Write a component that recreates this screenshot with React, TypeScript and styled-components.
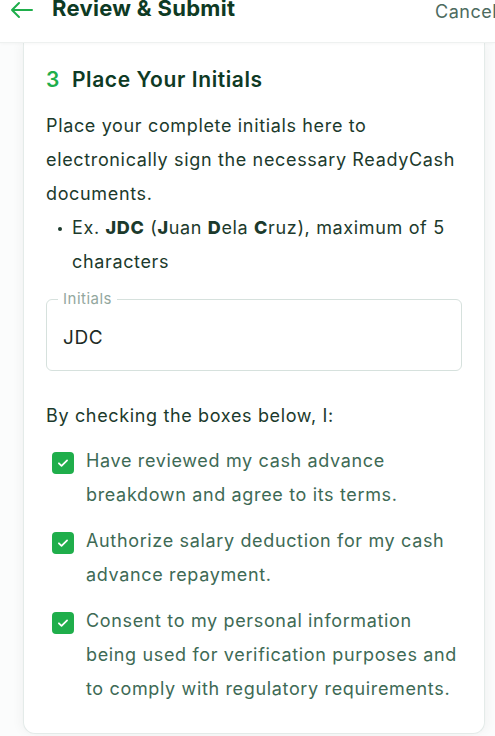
import React from "react";
import styled, { createGlobalStyle } from "styled-components";

const Global = createGlobalStyle`
  html, body { margin: 0; padding: 0; background: #fbfcfc; }
  body { font-family: Inter, "Noto Sans", sans-serif; -webkit-font-smoothing: antialiased; }
  * { box-sizing: border-box; }
`;

const Page = styled.div`
  width: 495px;
  height: 736px;
  overflow: hidden;
  background: #fbfcfc;
  display: flex;
  flex-direction: column;
`;

const Header = styled.header`
  height: 43px;
  flex: none;
  display: flex;
  align-items: flex-start;
  padding: 0 0 0 10px;
  background: #fff;
  border-bottom: 1px solid #eef1f0;
  box-shadow: 0 1px 3px rgba(0, 0, 0, 0.03);
  position: relative;
  z-index: 1;
`;

const BackButton = styled.span`
  width: 24px;
  height: 20px;
  display: flex;
  align-items: center;
  color: #1fae4b;
`;

const Title = styled.h1`
  margin: -5px 0 0 18px;
  font: 700 22px/26px Inter, "Noto Sans", sans-serif;
  color: #0e3a24;
  letter-spacing: 0.3px;
  flex: 1;
`;

const Cancel = styled.span`
  margin-top: 0px;
  font: 400 18px/24px Inter, "Noto Sans", sans-serif;
  letter-spacing: 0.5px;
  color: #4d6b60;
  white-space: nowrap;
  width: 60px;
  overflow: hidden;
`;

const Card = styled.section`
  margin: 0 10px 0 23px;
  background: #fff;
  border: 1px solid #e4ebe9;
  border-top: none;
  border-radius: 0 0 12px 12px;
  box-shadow: -4px 0 10px rgba(0, 0, 0, 0.03), 4px 0 10px rgba(0, 0, 0, 0.03);
  padding: 22px 22px 0 22px;
  height: 691px;
  flex: none;
`;

const SectionTitle = styled.h2`
  margin: 0;
  display: flex;
  gap: 12px;
  font: 600 21px/30px Inter, "Noto Sans", sans-serif;
  letter-spacing: 0.6px;
  color: #0e3a24;
`;

const StepNum = styled.span`
  color: #1fae4b;
`;

const bodyText = `
  font-family: Inter, "Noto Sans", sans-serif;
  font-size: 18px;
  font-weight: 400;
  line-height: 34px;
  letter-spacing: 0.65px;
`;

const Paragraph = styled.p`
  margin: 14px 0 0 0;
  ${bodyText}
  color: #1c3a2c;
`;

const Bullets = styled.ul`
  margin: 0;
  padding: 0 0 0 26px;
  list-style: none;
  ${bodyText}
  color: #1c3a2c;
`;

const Bullet = styled.li`
  position: relative;
  &::before {
    content: "";
    position: absolute;
    left: -14px;
    top: 16px;
    width: 4px;
    height: 4px;
    border-radius: 50%;
    background: #1c3a2c;
  }
  strong { font-weight: 800; }
`;

const Field = styled.fieldset`
  margin: 11px 0 0 0;
  padding: 0 16px;
  border: 1.5px solid #d6e1dd;
  border-radius: 6px;
  height: 81px;
`;

const Legend = styled.legend`
  padding: 0 5px;
  margin-left: -5px;
  font: 400 15px/18px Inter, "Noto Sans", sans-serif;
  letter-spacing: 0.5px;
  color: #93a79e;
`;

const Value = styled.div`
  margin-top: 18px;
  font: 400 19px/24px Inter, "Noto Sans", sans-serif;
  letter-spacing: 0.6px;
  color: #1e2a25;
`;

const Lead = styled.p`
  margin: 28px 0 0 0;
  ${bodyText}
  color: #1c3a2c;
`;

const Checks = styled.div`
  margin-top: 11px;
  display: flex;
  flex-direction: column;
  gap: 12px;
  padding-left: 6px;
`;

const CheckRow = styled.label`
  display: flex;
  gap: 12px;
  align-items: flex-start;
  ${bodyText}
  color: #3e6a55;
`;

const Box = styled.span`
  flex: none;
  width: 22px;
  height: 22px;
  margin-top: 8px;
  border-radius: 4px;
  background: #1fae4b;
  display: flex;
  align-items: center;
  justify-content: center;
`;

const Check = () => (
  <Box>
    <svg width="14" height="14" viewBox="0 0 24 24" fill="none" stroke="#fff" strokeWidth="3" strokeLinecap="round" strokeLinejoin="round">
      <path d="M5 12.5l4.5 4.5L19 7.5" />
    </svg>
  </Box>
);

export default function App() {
  return (
    <Page>
      <Global />
      <Header>
        <BackButton>
          <svg width="24" height="18" viewBox="0 0 24 18" fill="none" stroke="currentColor" strokeWidth="2" strokeLinecap="round" strokeLinejoin="round">
            <path d="M22 9H2M9 2L2 9l7 7" />
          </svg>
        </BackButton>
        <Title>Review &amp; Submit</Title>
        <Cancel>Cancel</Cancel>
      </Header>
      <Card>
        <SectionTitle>
          <StepNum>3</StepNum>
          <span>Place Your Initials</span>
        </SectionTitle>
        <Paragraph>
          Place your complete initials here to electronically sign the necessary ReadyCash documents.
        </Paragraph>
        <Bullets>
          <Bullet>
            Ex. <strong>JDC</strong> (<strong>J</strong>uan <strong>D</strong>ela <strong>C</strong>ruz), maximum of 5 characters
          </Bullet>
        </Bullets>
        <Field>
          <Legend>Initials</Legend>
          <Value>JDC</Value>
        </Field>
        <Lead>By checking the boxes below, I:</Lead>
        <Checks>
          <CheckRow>
            <Check />
            <span>Have reviewed my cash advance breakdown and agree to its terms.</span>
          </CheckRow>
          <CheckRow>
            <Check />
            <span>Authorize salary deduction for my cash advance repayment.</span>
          </CheckRow>
          <CheckRow>
            <Check />
            <span>Consent to my personal information being used for verification purposes and to comply with regulatory requirements.</span>
          </CheckRow>
        </Checks>
      </Card>
    </Page>
  );
}
